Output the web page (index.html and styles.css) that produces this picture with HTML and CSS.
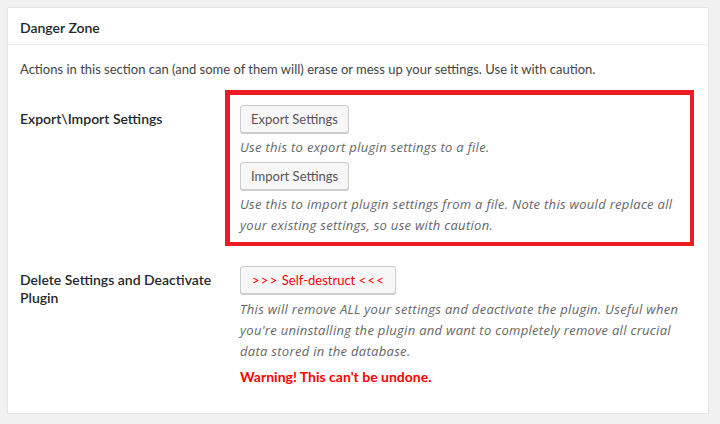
FILE: index.html
```html
<!DOCTYPE html>
<html lang="en">
<head>
<meta charset="utf-8">
<title>Danger Zone</title>
<link rel="stylesheet" href="styles.css">
</head>
<body>
<div class="panel">
  <h2 class="panel-head">Danger Zone</h2>
  <div class="panel-body">
    <p class="intro">Actions in this section can (and some of them will) erase or mess up your settings. Use it with caution.</p>
    <div class="row row-first">
      <div class="label">Export\Import Settings</div>
      <div class="field highlighted">
        <button class="btn" type="button">Export Settings</button>
        <p class="description">Use this to export plugin settings to a file.</p>
        <button class="btn btn-next" type="button">Import Settings</button>
        <p class="description">Use this to import plugin settings from a file. Note this would replace all your existing settings, so use with caution.</p>
      </div>
    </div>
    <div class="row row-second">
      <div class="label">Delete Settings and Deactivate Plugin</div>
      <div class="field plain">
        <button class="btn btn-danger" type="button"><span class="chev">&gt;&gt;&gt;</span> Self-destruct <span class="chev">&lt;&lt;&lt;</span></button>
        <p class="description desc-danger">This will remove ALL your settings and deactivate the plugin. Useful when you're uninstalling the plugin and want to completely remove all crucial data stored in the database.</p>
        <p class="warning">Warning! This can't be undone.</p>
      </div>
    </div>
  </div>
</div>
</body>
</html>
```
FILE: styles.css
```css
* { box-sizing: border-box; }

body {
  margin: 0;
  padding: 7px 12px 0 7px;
  background: #f1f1f1;
  font-family: Lato, "Liberation Sans", sans-serif;
  font-size: 13px;
  color: #444;
}

.panel {
  width: 702px;
  height: 407px;
  background: #fff;
  border: 1px solid #e5e5e5;
  box-shadow: 0 1px 1px rgba(0, 0, 0, 0.06);
}

.panel-head {
  margin: 0;
  height: 37px;
  padding: 2px 12px 0;
  display: flex;
  align-items: center;
  border-bottom: 1px solid #eee;
  font-size: 14px;
  font-weight: 600;
  color: #23282d;
}

.panel-body {
  padding: 0 12px;
}

.intro {
  margin: 14px 0 0;
  line-height: 20px;
}

.row {
  display: flex;
  align-items: flex-start;
}

.row-first { margin-top: 11px; }
.row-second { margin-top: 5px; }

.label {
  width: 205px;
  flex: none;
  padding-top: 20px;
  padding-right: 10px;
  font-size: 14px;
  font-weight: 600;
  line-height: 18px;
  color: #23282d;
}

.field {
  width: 469px;
}

.highlighted {
  border-style: solid;
  border-color: #ed1c24;
  border-width: 5px 4px 4px 5px;
  padding: 10px 10px 6px 10px;
}

.plain {
  padding: 15px 10px 0 15px;
}

.btn {
  display: inline-block;
  height: 28px;
  margin: 0;
  padding: 0 10px 1px;
  font-family: inherit;
  font-size: 13px;
  line-height: 26px;
  color: #555;
  background: #f7f7f7;
  border: 1px solid #ccc;
  border-radius: 3px;
  box-shadow: 0 1px 0 #ccc;
  vertical-align: top;
}

.btn-next { margin-top: 4px; }

.btn-danger { color: #f00; padding: 0 10px 1px 11px; }

.chev { letter-spacing: 1.3px; }

.description {
  margin: 4px 0 0;
  font-family: "Open Sans", sans-serif;
  font-style: italic;
  font-size: 13px;
  line-height: 21px;
  letter-spacing: 0.3px;
  color: #666;
}

.desc-danger { margin-top: 5px; }

.warning {
  margin: 6px 0 0;
  font-size: 14px;
  font-weight: 700;
  line-height: 18px;
  color: #f00;
}
```
